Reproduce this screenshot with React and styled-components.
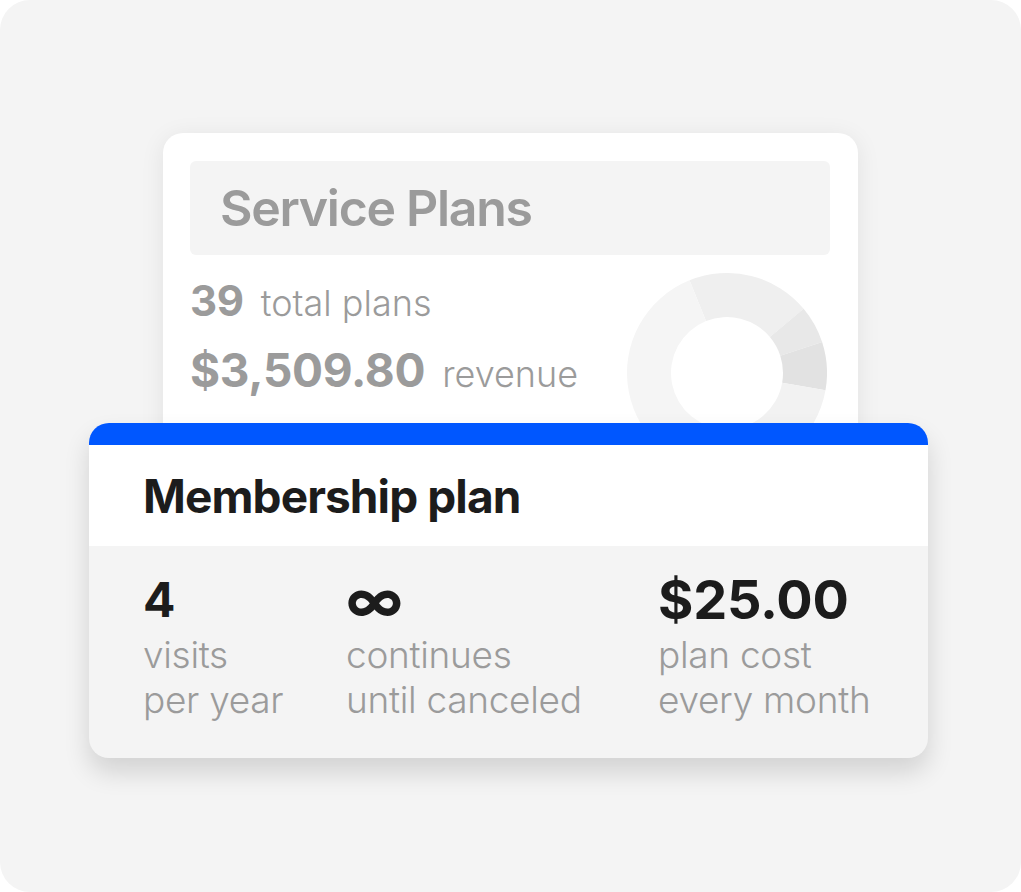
import React from 'react';
import styled, { createGlobalStyle } from 'styled-components';

const Global = createGlobalStyle`
  html, body { margin: 0; padding: 0; background: #ffffff; }
  body { font-family: Inter, "Open Sans", sans-serif; }
`;

const Panel = styled.div`
  width: 1021px;
  height: 892px;
  background: #f4f4f4;
  border-radius: 30px;
  box-sizing: border-box;
  padding-top: 133px;
  display: flex;
  flex-direction: column;
  align-items: flex-start;
  overflow: hidden;
`;

const BackCard = styled.section`
  width: 695px;
  margin-left: 163px;
  box-sizing: border-box;
  background: #ffffff;
  border-radius: 20px;
  box-shadow: 0 4px 24px rgba(0, 0, 0, 0.08);
  padding: 28px 28px 140px 27px;
`;

const BackHeader = styled.div`
  height: 94px;
  background: #f4f4f4;
  border-radius: 6px;
  display: flex;
  align-items: center;
  padding-left: 30px;
`;

const BackTitle = styled.h2`
  margin: 0;
  font-size: 50px;
  font-weight: 600;
  letter-spacing: -1.3px;
  color: #9b9b9b;
`;

const BackBody = styled.div`
  display: flex;
  justify-content: space-between;
  padding-top: 20px;
`;

const StatList = styled.div`
  display: flex;
  flex-direction: column;
  gap: 16px;
`;

const StatLine = styled.div`
  display: flex;
  align-items: baseline;
  gap: 17px;
  color: #9b9b9b;
`;

const StatNum = styled.span`
  font-size: ${p => p.size}px;
  font-weight: 700;
  letter-spacing: -0.3px;
`;

const StatWord = styled.span`
  font-size: 36px;
  font-weight: 300;
  letter-spacing: 0px;
`;

const Donut = styled.svg`
  width: 200px;
  height: 200px;
  margin-top: -2px;
  margin-right: 3px;
`;

const FrontCard = styled.section`
  width: 839px;
  margin-left: 89px;
  margin-top: -190px;
  position: relative;
  border-radius: 20px;
  overflow: hidden;
  background: #f4f4f4;
  box-shadow: 0 14px 26px rgba(0, 0, 0, 0.14);
`;

const BlueBar = styled.div`
  height: 22px;
  background: #0057ff;
`;

const FrontHeader = styled.div`
  height: 101px;
  background: #ffffff;
  display: flex;
  align-items: center;
  padding-left: 54px;
`;

const FrontTitle = styled.h1`
  margin: 0;
  font-size: 46px;
  font-weight: 700;
  letter-spacing: -0.9px;
  color: #1c1c1c;
`;

const StatsGrid = styled.div`
  display: grid;
  grid-template-columns: 203px 312px 1fr;
  padding: 26px 0 36px 54px;
`;

const Col = styled.div`
  display: flex;
  flex-direction: column;
`;

const Value = styled.div`
  font-size: ${p => p.size || 48}px;
  font-weight: 700;
  color: #1c1c1c;
  line-height: 56px;
  height: 56px;
  margin-bottom: 4px;
  letter-spacing: -0.2px;
`;

const Label = styled.div`
  font-size: 37px;
  font-weight: 300;
  line-height: 45px;
  color: #9b9b9b;
  letter-spacing: -0.3px;
`;

const segs = [
  { from: -112, to: -40, c: '#efefef' },
  { from: -40, to: -18, c: '#e8e8e8' },
  { from: -18, to: 10, c: '#e2e2e2' },
  { from: 10, to: 90, c: '#f2f2f2' },
  { from: 90, to: 248, c: '#f5f5f5' },
];

const arc = (a0, a1, r0, r1) => {
  const p = (a, r) => {
    const t = (a * Math.PI) / 180;
    return `${100 + r * Math.cos(t)} ${100 + r * Math.sin(t)}`;
  };
  const big = a1 - a0 > 180 ? 1 : 0;
  return `M ${p(a0, r1)} A ${r1} ${r1} 0 ${big} 1 ${p(a1, r1)} L ${p(a1, r0)} A ${r0} ${r0} 0 ${big} 0 ${p(a0, r0)} Z`;
};

const App = () => (
  <>
    <Global />
    <Panel>
      <BackCard>
        <BackHeader>
          <BackTitle>Service Plans</BackTitle>
        </BackHeader>
        <BackBody>
          <StatList>
            <StatLine>
              <StatNum size={42}>39</StatNum>
              <StatWord>total plans</StatWord>
            </StatLine>
            <StatLine>
              <StatNum size={46}>$3,509.80</StatNum>
              <StatWord>revenue</StatWord>
            </StatLine>
          </StatList>
          <Donut viewBox="0 0 200 200">
            {segs.map(s => (
              <path key={s.from} d={arc(s.from, s.to, 56, 100)} fill={s.c} />
            ))}
          </Donut>
        </BackBody>
      </BackCard>
      <FrontCard>
        <BlueBar />
        <FrontHeader>
          <FrontTitle>Membership plan</FrontTitle>
        </FrontHeader>
        <StatsGrid>
          <Col>
            <Value>4</Value>
            <Label>visits</Label>
            <Label>per year</Label>
          </Col>
          <Col>
            <Value size={58}>∞</Value>
            <Label>continues</Label>
            <Label>until canceled</Label>
          </Col>
          <Col>
            <Value size={54}>$25.00</Value>
            <Label>plan cost</Label>
            <Label>every month</Label>
          </Col>
        </StatsGrid>
      </FrontCard>
    </Panel>
  </>
);

export default App;
